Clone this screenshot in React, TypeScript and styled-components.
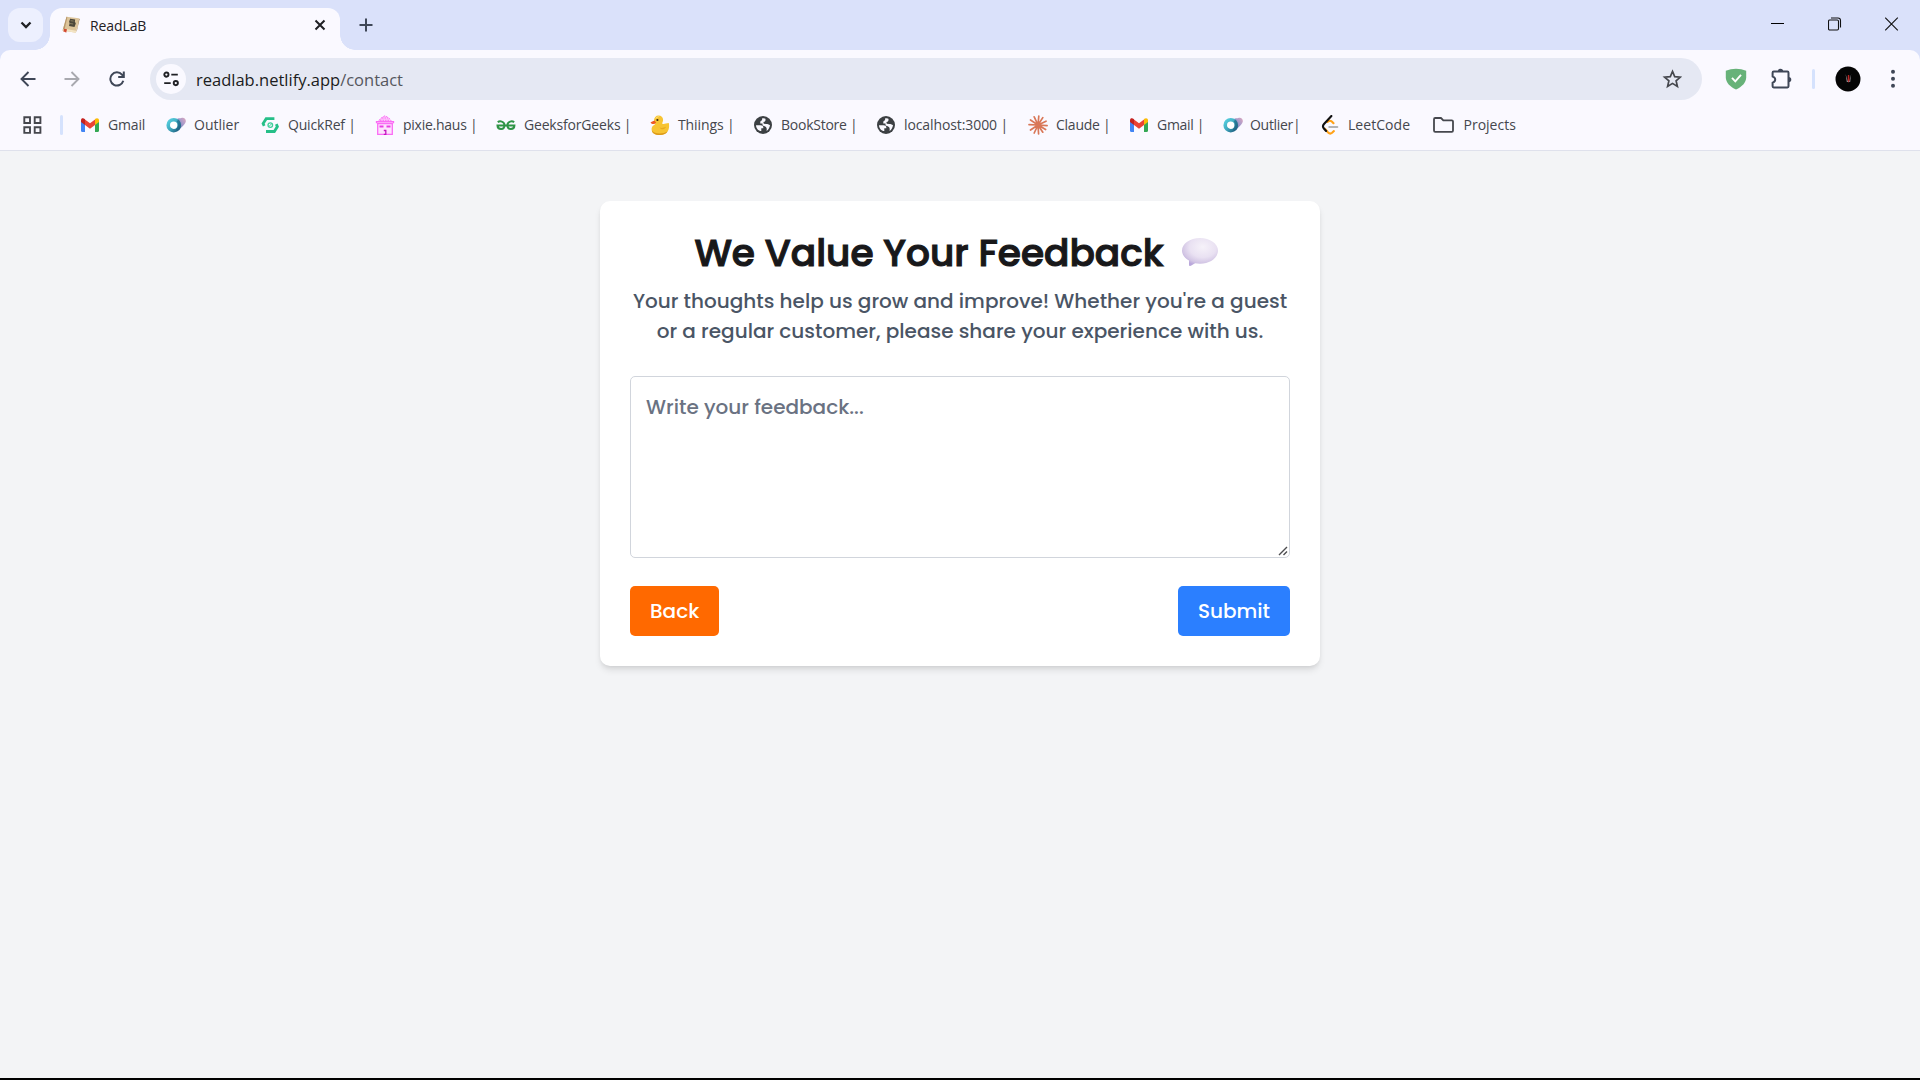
import React from "react";
import styled, { createGlobalStyle } from "styled-components";

const GlobalStyle = createGlobalStyle`
  * { box-sizing: border-box; }
  body { margin: 0; background: #f3f4f6; overflow: hidden; }
  svg { display: block; flex: none; }
`;

const ui = `"Segoe UI", "Open Sans", "Noto Sans", sans-serif`;
const brand = `Poppins, Inter, sans-serif`;

const Window = styled.div`
  display: flex;
  flex-direction: column;
  width: 1920px;
  height: 1080px;
  background: #f3f4f6;
  border-bottom: 2px solid #000;
  font-family: ${ui};
`;

/* ---------- tab strip ---------- */
const TabStrip = styled.div`
  display: flex;
  height: 50px;
  padding: 8px 0 0 8px;
  background: #dae1fa;
`;
const TabSearch = styled.button`
  display: grid;
  place-items: center;
  width: 35px;
  height: 34px;
  padding: 0;
  border: 0;
  border-radius: 12px;
  background: #edf0fe;
`;
const Tab = styled.div`
  position: relative;
  display: flex;
  align-items: center;
  width: 290px;
  height: 42px;
  margin-left: 7px;
  padding: 0 14px 8px 12px;
  border-radius: 12px 12px 0 0;
  background: #faf9ff;
  &::before, &::after {
    content: "";
    position: absolute;
    bottom: 0;
    width: 15px;
    height: 15px;
  }
  &::before {
    left: -15px;
    background: radial-gradient(circle at 0 0, transparent 14.5px, #faf9ff 15px);
  }
  &::after {
    right: -15px;
    background: radial-gradient(circle at 100% 0, transparent 14.5px, #faf9ff 15px);
  }
`;
const TabTitle = styled.span`
  flex: 1;
  margin-left: 10px;
  padding-top: 2px;
  font-size: 14px;
  line-height: 20px;
  letter-spacing: -0.1px;
  color: #1f2024;
`;
const NewTab = styled.div`
  padding: 10px 0 0 19px;
`;
const WindowControls = styled.div`
  display: flex;
  height: 34px;
  margin: -1px 0 0 auto;
  padding-right: 0;
`;
const Control = styled.div`
  display: grid;
  place-items: center;
  width: 57px;
`;

/* ---------- toolbar ---------- */
const ToolbarFrame = styled.div`
  background: #dae1fa;
`;
const Toolbar = styled.div`
  display: flex;
  align-items: center;
  height: 58px;
  padding: 0 5px;
  border-radius: 10px 10px 0 0;
  background: #faf9ff;
`;
const Slot = styled.div<{ $w: number }>`
  display: grid;
  place-items: center;
  flex: none;
  width: ${(p) => p.$w}px;
`;
const Omnibox = styled.div`
  display: flex;
  align-items: center;
  flex: none;
  width: 1552px;
  height: 42px;
  margin: 0 10px 0 11px;
  padding: 0 20px 0 6px;
  border-radius: 21px;
  background: #e5e8f3;
`;
const SiteInfo = styled.div`
  display: grid;
  place-items: center;
  width: 30px;
  height: 30px;
  border-radius: 50%;
  background: #faf9ff;
`;
const Url = styled.span`
  flex: 1;
  margin-left: 10px;
  padding-top: 1px;
  font-size: 16.5px;
  line-height: 24px;
  color: #1b1c20;
  span { color: #55575e; }
`;
const Rule = styled.i<{ $ml: number; $mr: number }>`
  flex: none;
  width: 3px;
  height: 20px;
  margin: 0 ${(p) => p.$mr}px 0 ${(p) => p.$ml}px;
  border-radius: 2px;
  background: #d5e2fd;
`;

/* ---------- bookmarks ---------- */
const Bookmarks = styled.div`
  display: flex;
  align-items: center;
  height: 43px;
  padding: 0 0 8px 23px;
  border-bottom: 1px solid #dfe1ec;
  background: #faf9ff;
`;
const Bookmark = styled.a<{ $w: number; $ls?: number; $gap?: number }>`
  display: flex;
  align-items: center;
  flex: none;
  gap: ${(p) => p.$gap ?? 8}px;
  width: ${(p) => p.$w}px;
  font-size: 14px;
  line-height: 20px;
  letter-spacing: ${(p) => p.$ls ?? -0.18}px;
  white-space: nowrap;
  color: #45474d;
`;

/* ---------- page ---------- */
const Page = styled.main`
  display: flex;
  justify-content: center;
  align-items: flex-start;
  flex: 1;
  padding-top: 50px;
  background: #f3f4f6;
`;
const Card = styled.section`
  width: 720px;
  padding: 30px;
  border-radius: 10px;
  background: #fff;
  box-shadow: 0 5px 7.5px -1px rgba(0, 0, 0, 0.1), 0 2.5px 5px -2.5px rgba(0, 0, 0, 0.1);
  font: 500 20px/30px ${brand};
`;
const Title = styled.h1`
  display: flex;
  justify-content: center;
  gap: 12px;
  margin: 0 0 10px;
  font: 500 37.5px/45px ${brand};
  -webkit-text-stroke: 1.1px #18181a;
  color: #18181a;
`;
const Lead = styled.p`
  margin: 0 0 30px;
  text-align: center;
  color: #4a5565;
`;
const FeedbackField = styled.div`
  position: relative;
  margin-bottom: 28px;
`;
const Feedback = styled.textarea`
  display: block;
  width: 660px;
  height: 182px;
  margin: 0;
  padding: 15px;
  border: 1px solid #d1d5dc;
  border-radius: 5px;
  outline: 0;
  resize: none;
  background: #fff;
  font: 500 20px/30px ${brand};
  &::placeholder { color: #6a7282; opacity: 1; }
`;
const Grip = styled.svg`
  position: absolute;
  right: 2px;
  bottom: 2px;
`;
const Actions = styled.div`
  display: flex;
  justify-content: space-between;
`;
const Button = styled.button<{ $bg: string }>`
  height: 50px;
  padding: 0 20px;
  border: 0;
  border-radius: 5px;
  background: ${(p) => p.$bg};
  color: #fff;
  font: 500 20px/30px ${brand};
`;

/* ---------- icons ---------- */
const dark = "#3f4757";

const BookIcon = () => (
  <svg width="18" height="18" viewBox="0 0 18 18">
    <path d="M4.500.8 17 2.200 13.800 16.800.6 14.500z" fill="#dcc49a" />
    <path d="M4.500.8 5.400.9 2.300 14.800.6 14.500z" fill="#b8976a" />
    <path d="M.6 14.500 13.800 16.800l.5-2L2 12.800z" fill="#f3e4c4" />
    <path d="m14.500 15 2.500-12.800.6 1L14.600 16z" fill="#b08a58" />
    <path d="m8.200 2.800 5 .7-.4 2 1 2-1.300 3.400-5.500-.9.600-2.700-.5-1.700z" fill="#4b463a" />
    <path d="m8.600 4.700 3 .4M8 7.500l3.200.5" stroke="#a0926f" strokeWidth=".7" />
    <path d="m2 12.800 3 .5-.8 3.500-1.500-1-1.200.2z" fill="#d2492f" />
  </svg>
);
const GmailIcon = () => (
  <svg width="20" height="20" viewBox="0 0 20 20">
    <path d="M1 5v10.500Q1 17 2.400 17H5V8z" fill="#4285f4" />
    <path d="M15 8v9h2.600q1.400 0 1.400-1.500V5z" fill="#34a853" />
    <path d="M15 4.600V10l4-3V5.300C19 3 16.700 2.600 15 4z" fill="#fbbc04" />
    <path d="M5 4.400v5.500l5 3.800 5-3.800V4.400l-5 3.800z" fill="#ea4335" />
    <path d="M1 5.300V7l4 3V4.200C3.300 2.700 1 3 1 5.300z" fill="#c5221f" />
  </svg>
);
const OutlierIcon = ({ id }: { id: string }) => (
  <svg width="20" height="20" viewBox="0 0 20 20">
    <defs>
      <linearGradient id={`${id}a`} x1="0" y1="0" x2="1" y2="1">
        <stop offset="0" stopColor="#56d0df" />
        <stop offset=".5" stopColor="#3fa9bf" />
        <stop offset="1" stopColor="#1f5f80" />
      </linearGradient>
      <linearGradient id={`${id}b`} x1="0" y1="1" x2="1" y2="0">
        <stop offset="0" stopColor="#4b6fa8" />
        <stop offset=".6" stopColor="#a99bcb" />
        <stop offset="1" stopColor="#e0a9bd" />
      </linearGradient>
    </defs>
    <path d="M10.500 4.500C12.500 2.500 14 3.800 15.200 3c2.800-1.200 5 1 4.600 3.600-.5 3.200-3.600 4.300-6.800 8.800z" fill={`url(#${id}b)`} />
    <circle cx="7.700" cy="10.200" r="5.500" fill="#fff" stroke={`url(#${id}a)`} strokeWidth="3.600" />
    <path d="M11.500 5.500a6 6 0 0 1-1 9.800" fill="none" stroke="#1f6685" strokeWidth="2.600" opacity=".65" />
  </svg>
);
const QuickRefIcon = () => (
  <svg width="20" height="20" viewBox="0 0 20 20" fill="none">
    <path d="M4.200 10.800 3.100 8.600 6.200 3.700H14.400M16.300 9.200l1.100 2.400-3.100 4.900H6" stroke="#25bf88" strokeWidth="2.800" />
    <circle cx="10.300" cy="10.100" r="2.300" stroke="#3ecf9a" strokeWidth="1.300" />
    <path d="m8.900 11.500 2.800-2.800" stroke="#3ecf9a" />
  </svg>
);
const PixieIcon = () => (
  <svg width="20" height="20" viewBox="0 0 20 20" fill="none" stroke="#fb6cf5">
    <path d="M10 .7 5.500 3.500 3 7H17L14.500 3.500z" fill="#fdc4fa" strokeDasharray="2 1" />
    <path d="M5 5.300h10M7 3h6" strokeDasharray="1.500 1" />
    <path d="M1.500 8.200V6.600h17v1.600M2.700 8.500v11h14.600v-11z" strokeWidth="1.300" fill="#fde3fd" />
    <path d="M4.500 11.500h4M11.500 11.500h4" stroke="#e93ee5" strokeWidth="1.800" />
    <path d="M8.800 15.500h2v4h-2" stroke="#c318c0" strokeWidth="1.300" />
  </svg>
);
const GfgIcon = () => (
  <svg width="20" height="20" viewBox="0 0 20 20" fill="none" stroke="#2f9446" strokeWidth="2">
    <path d="M1.800 7.300C3.500 5.700 8.500 6 8.500 10.300c0 4.900-6.700 4.900-7 .3h16.900c-.3 4.600-7 4.600-7-.3 0-4.300 5-4.600 6.700-3" />
  </svg>
);
const DuckIcon = () => (
  <svg width="20" height="20" viewBox="0 0 20 20">
    <path d="M4 5.500C4 2.500 6 .5 8.500.5c3 0 5 2.300 4.500 5.200-.2 1.600-1.200 2.500-.6 3 1.600.7 3.600-.6 6.400-.7 1.300 6.500-1.300 12-8.800 12-6 0-9-2.800-8.300-7C2.200 10.500 4.500 10 5.300 9 4.300 8 4 7 4 5.500z" fill="#f7c433" />
    <path d="M2 15.500c2 3.500 11 4 15.700.7C16.200 18.800 13.700 20 10 20c-5 0-8-2-8-4.500z" fill="#dc9a1c" />
    <path d="M5.500 4C6 2 8 1 9.500 1.800 8 2 6.500 3 5.500 4z" fill="#fff0a0" />
    <path d="M9.500 12.500c2 .8 4.500.5 6.500-1-.5 3-4.700 4-6.500 1z" fill="#e8a920" />
    <path d="M.5 7.200C1.700 7 3 5.500 4.600 5.700L6.200 7.500 4.300 9C2.500 9.300 1.200 8.700.5 7.200z" fill="#ee5a24" />
    <circle cx="7.400" cy="5" r="1.100" fill="#3a2410" />
  </svg>
);
const GlobeIcon = () => (
  <svg width="20" height="20" viewBox="0 0 20 20">
    <circle cx="10" cy="10" r="9" fill="#3c4043" />
    <path d="M3 10.200h4.500c1.600 0 2.800.8 2.800 2v1h-2v2.900c-3-.3-5.300-3-5.300-5.900z" fill="#faf9ff" />
    <path d="M9.200 3.200c2.600-.4 5.400 1 6.800 3.200l1 3.500c-.2 2.600-1.600 4.800-3.400 6 .4-2.700-.1-4-1.900-4.700-.8-.3-2.200-.2-2.200-1.400V8.500H7.300V7.300c0-1 .7-1.700 1.700-1.700z" fill="#faf9ff" />
    <path d="M12.500 3.500v1.600c0 1.200-.8 2-2 2V8.300c1.700 1.500 4.600.3 5.700 1.800l1.500-.5C17.600 6.500 15.600 4 12.500 3.500z" fill="#3c4043" />
  </svg>
);
const ClaudeIcon = () => (
  <svg width="20" height="20" viewBox="0 0 20 20" stroke="#d97757" strokeWidth="1.700" strokeLinecap="round">
    <path d="M10 10 10.800 1M10 10l4.800-7.400M10 10l8-3.800M10 10l9.100.6M10 10l7.600 4.600M10 10l4.800 7.200M10 10l.6 9M10 10l-3.800 8M10 10l-7.500 5M10 10l-9-.3M10 10 2.500 5M10 10 6.200 1.800" />
  </svg>
);
const LeetIcon = () => (
  <svg width="20" height="20" viewBox="0 0 20 20" fill="none" strokeLinecap="round" strokeWidth="2.100">
    <path d="M9.300 12h8" stroke="#b3b3b3" />
    <path d="M7.600 6.800 8.800 6q1.500-.8 3 .5l1.700 1.700M4.800 13.700l3.300 3.800q2 2 4 .3l1.800-1.700" stroke="#ffa116" />
    <path d="M11.400 1 4 9q-2 2.300-.1 4.500L6.100 16" stroke="#111" />
  </svg>
);
const FolderIcon = () => (
  <svg width="21" height="20" viewBox="0 0 21 20" fill="none" stroke="#45474d" strokeWidth="1.800" strokeLinejoin="round">
    <path d="M1 4.200Q1 3 2.200 3H8l2.300 2.300h8.500Q20 5.300 20 6.500v9q0 1.300-1.200 1.300H2.200Q1 16.800 1 15.500z" />
  </svg>
);
const AppsIcon = () => (
  <svg width="19" height="20" viewBox="0 0 19 20" fill="none" stroke="#45474d" strokeWidth="1.900">
    <path d="M1.300 2.300h5.700v5.700H1.300zM11.700 2.300h5.700v5.700h-5.700zM1.300 12.200h5.700v5.700H1.300zM11.700 12.200h5.700v5.700h-5.700z" />
  </svg>
);
const SpeechEmoji = () => (
  <svg width="50" height="45" viewBox="0 0 50 45">
    <defs>
      <radialGradient id="bubble" cx=".58" cy=".32" r=".68">
        <stop offset="0" stopColor="#f6f2f9" />
        <stop offset=".55" stopColor="#e9e1f2" />
        <stop offset=".85" stopColor="#d2c5e4" />
        <stop offset="1" stopColor="#b9a7db" />
      </radialGradient>
    </defs>
    <path d="M24 7c10 0 18 5.800 18 12.600 0 7-7.500 13.100-18 13.100-1.800 0-3.200-.3-4.800-.5-2 .8-3.400 2.200-5 2.800-.8.200-1.200-.2-1.200-1V29.500C9 27.300 6 23.600 6 19.600 6 12.800 14 7 24 7z" fill="url(#bubble)" />
  </svg>
);

const bookmarks = [
  { label: "Gmail", icon: <GmailIcon />, width: 86 },
  { label: "Outlier", icon: <OutlierIcon id="o1" />, width: 94, spacing: 0 },
  { label: "QuickRef |", icon: <QuickRefIcon />, width: 115 },
  { label: "pixie.haus |", icon: <PixieIcon />, width: 121, spacing: -0.25 },
  { label: "GeeksforGeeks |", icon: <GfgIcon />, width: 154 },
  { label: "Thiings |", icon: <DuckIcon />, width: 103, spacing: -0.1 },
  { label: "BookStore |", icon: <GlobeIcon />, width: 123, spacing: -0.25 },
  { label: "localhost:3000 |", icon: <GlobeIcon />, width: 152, spacing: -0.1 },
  { label: "Claude |", icon: <ClaudeIcon />, width: 101, spacing: -0.25 },
  { label: "Gmail |", icon: <GmailIcon />, width: 94, spacing: -0.3 },
  { label: "Outlier|", icon: <OutlierIcon id="o2" />, width: 97, spacing: -0.3, gap: 7 },
  { label: "LeetCode", icon: <LeetIcon />, width: 113, spacing: 0.05 },
  { label: "Projects", icon: <FolderIcon />, width: 100, spacing: 0, gap: 9.5 },
];

export default function App() {
  return (
    <Window>
      <GlobalStyle />
      <TabStrip>
        <TabSearch aria-label="Search tabs">
          <svg width="12" height="8" viewBox="0 0 12 8" fill="none" stroke="#1f2024" strokeWidth="2.300">
            <path d="m1.500 1.500 4.500 4.500 4.500-4.500" />
          </svg>
        </TabSearch>
        <Tab>
          <BookIcon />
          <TabTitle>ReadLaB</TabTitle>
          <svg width="12" height="12" viewBox="0 0 12 12" stroke="#1f2024" strokeWidth="2">
            <path d="m1.500 1.500 9 9m0-9-9 9" />
          </svg>
        </Tab>
        <NewTab>
          <svg width="14" height="14" viewBox="0 0 14 14" stroke={dark} strokeWidth="2">
            <path d="M7 .5v13M.5 7h13" />
          </svg>
        </NewTab>
        <WindowControls>
          <Control>
            <svg width="14" height="14" viewBox="0 0 14 14" stroke="#000">
              <path d="M0 6.500h13" />
            </svg>
          </Control>
          <Control>
            <svg width="14" height="14" viewBox="0 0 14 14" fill="none" stroke="#111" strokeWidth="1.100">
              <rect x=".5" y="3" width="10" height="10" rx="1.200" />
              <path d="M3 1h7q2.500 0 2.500 2.500v7" />
            </svg>
          </Control>
          <Control>
            <svg width="14" height="14" viewBox="0 0 14 14" stroke="#111" strokeWidth="1.100">
              <path d="m.2.700 12.600 12.600m0-12.600L.2 13.300" />
            </svg>
          </Control>
        </WindowControls>
      </TabStrip>

      <ToolbarFrame>
        <Toolbar>
          <Slot $w={45}>
            <svg width="16" height="16" viewBox="0 0 16 16" fill="none" stroke={dark} strokeWidth="1.900">
              <path d="M15.500 8H2M8.500 1 1.500 8l7 7" />
            </svg>
          </Slot>
          <Slot $w={44}>
            <svg width="16" height="16" viewBox="0 0 16 16" fill="none" stroke="#a8a9af" strokeWidth="1.900">
              <path d="M.5 8H14M7.500 1l7 7-7 7" />
            </svg>
          </Slot>
          <Slot $w={46}>
            <svg width="16" height="16" viewBox="0 0 16 16" fill="none" stroke={dark} strokeWidth="2">
              <path d="M14.300 9.800A6.600 6.600 0 1 1 13 3.700L14.500 5.700M14.800.500v5.600H9.200" />
            </svg>
          </Slot>
          <Omnibox style={{ marginLeft: 10 }}>
            <SiteInfo>
              <svg width="16" height="16" viewBox="0 0 16 16" fill="none" stroke="#1f2024" strokeWidth="1.900">
                <circle cx="3.400" cy="3.600" r="2.100" />
                <path d="M8.300 3.600h6.500M1.200 12.100h6.500" />
                <circle cx="12.800" cy="12.100" r="2.100" />
              </svg>
            </SiteInfo>
            <Url>readlab.netlify.app<span>/contact</span></Url>
            <svg width="20" height="20" viewBox="0 0 20 20" fill="none" stroke="#45474d" strokeWidth="1.700">
              <path d="m10.500 2.400 2.200 5.200 5.700.5-4.300 3.700 1.300 5.600-4.900-3-4.900 3 1.300-5.600-4.300-3.700 5.700-.5z" />
            </svg>
          </Omnibox>
          <Slot $w={47}>
            <svg width="22" height="22" viewBox="0 0 22 22">
              <path d="M11 .7c3.600 0 7 .7 10.200 2v6.600c0 5.500-4.300 9.500-10.200 12.200C5.100 18.800.8 14.800.8 9.300V2.700C4 1.400 7.400.7 11 .7z" fill="#67b279" />
              <path d="m7 9.800 3.300 3.500L16 6.800" fill="none" stroke="#fff" strokeWidth="1.900" />
            </svg>
          </Slot>
          <Slot $w={46}>
            <svg width="22" height="22" viewBox="0 0 22 22" fill="none">
              <path d="M3.600 3.600h12.800q1.100 0 1.100 1.100v13.600q0 1.100-1.100 1.100H2.700q-1.100 0-1.100-1.100v-3.700c1.600-.4 2.600-1.400 2.600-3s-1-2.600-2.600-3V4.700q0-1.100 1.100-1.100z" stroke={dark} strokeWidth="2" strokeLinejoin="round" />
              <path d="M6.800 3.500a2.700 2.700 0 0 1 5.400 0zM17.600 8.900a2.700 2.700 0 0 1 0 5.400z" fill={dark} />
            </svg>
          </Slot>
          <Rule $ml={7} $mr={10} />
          <Slot $w={45}>
            <svg width="26" height="26" viewBox="0 0 26 26">
              <circle cx="13" cy="13" r="12.500" fill="#050505" />
              <path d="m10.600 8 1.200 8h3.400l1-8-2 7h-1.400z" fill="#8d8d92" />
              <path d="m12.900 9 1.300-.1.400 5-.9 3-1-3z" fill="#b72424" />
            </svg>
          </Slot>
          <Slot $w={45}>
            <svg width="4" height="20" viewBox="0 0 4 20" fill={dark}>
              <circle cx="2" cy="2.800" r="2" />
              <circle cx="2" cy="9.700" r="2" />
              <circle cx="2" cy="16.700" r="2" />
            </svg>
          </Slot>
        </Toolbar>
      </ToolbarFrame>

      <Bookmarks>
        <AppsIcon />
        <Rule $ml={18} $mr={17} />
        {bookmarks.map((b) => (
          <Bookmark key={b.label} $w={b.width} $ls={b.spacing} $gap={b.gap}>
            {b.icon}
            {b.label}
          </Bookmark>
        ))}
      </Bookmarks>

      <Page>
        <Card>
          <Title>
            We Value Your Feedback
            <SpeechEmoji />
          </Title>
          <Lead>
            Your thoughts help us grow and improve! Whether you're a guest or a regular customer, please share your experience with us.
          </Lead>
          <FeedbackField>
            <Feedback placeholder="Write your feedback..." />
            <Grip width="10" height="10" viewBox="0 0 10 10" stroke="#4d4d50" strokeWidth="1.400">
              <path d="M1 9 9 1M5.500 9 9 5.500" />
            </Grip>
          </FeedbackField>
          <Actions>
            <Button $bg="#ff6900">Back</Button>
            <Button $bg="#2b7fff">Submit</Button>
          </Actions>
        </Card>
      </Page>
    </Window>
  );
}
